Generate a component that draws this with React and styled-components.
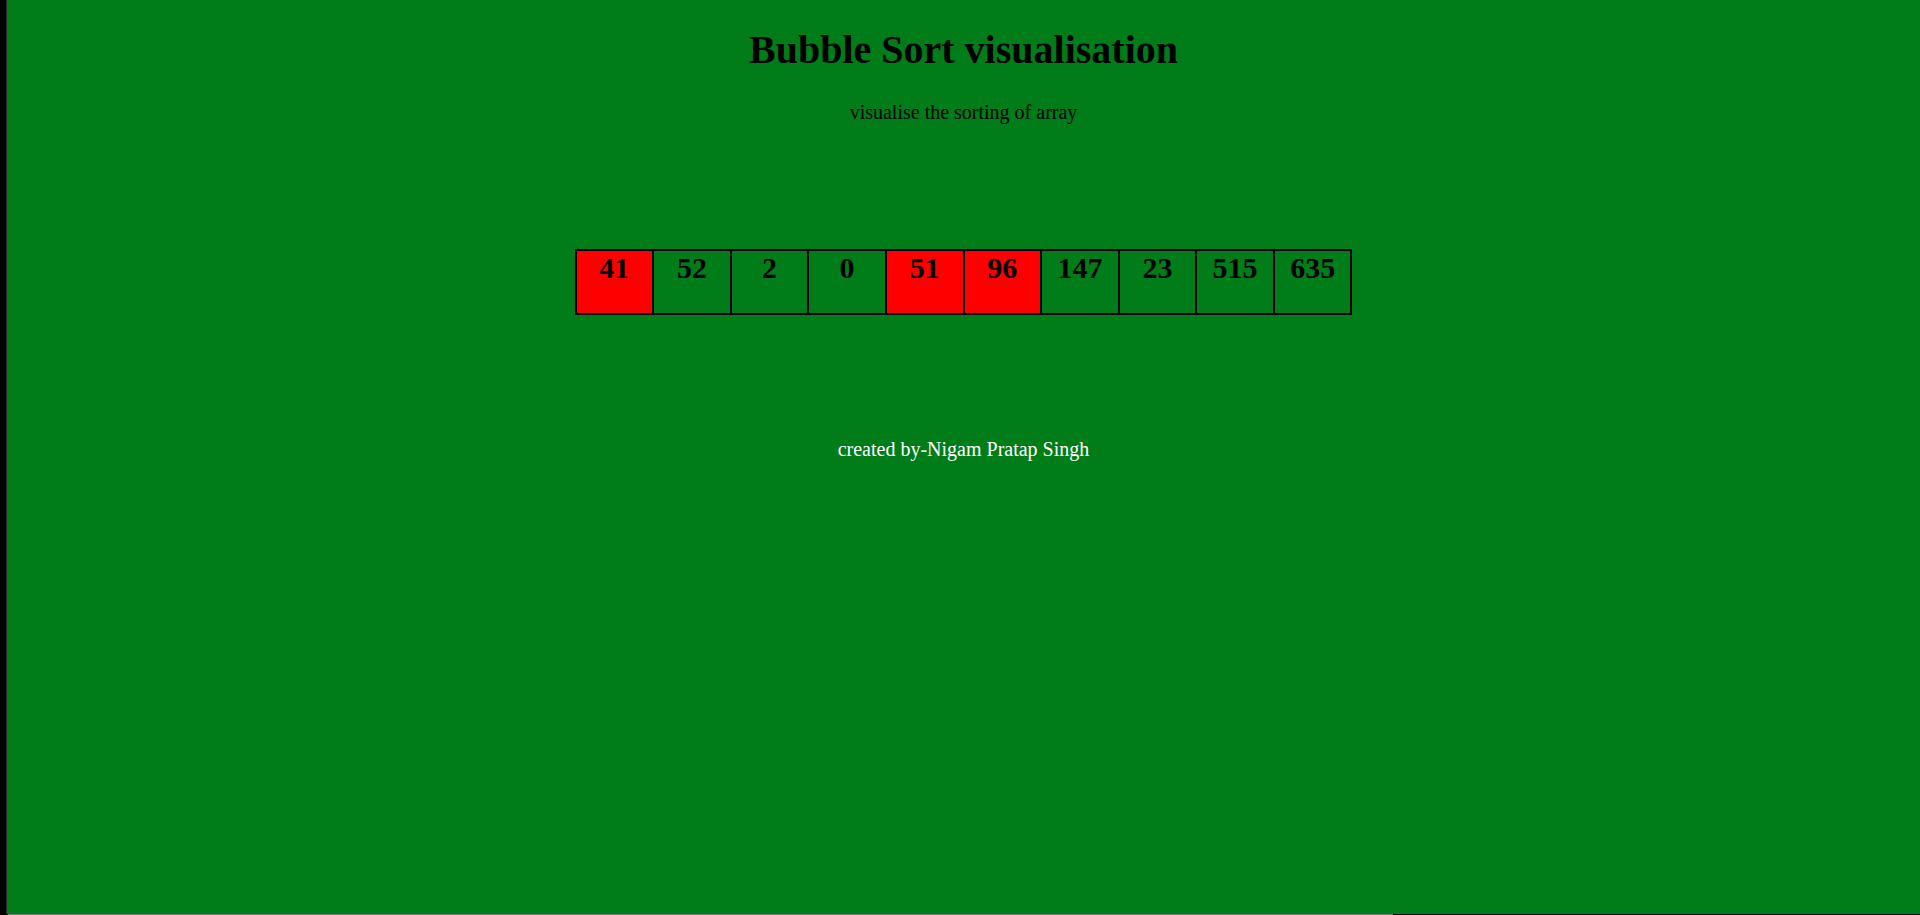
import React from "react";
import styled, { createGlobalStyle } from "styled-components";

const Global = createGlobalStyle`
  html, body { margin: 0; padding: 0; background: #000; }
  body { font-family: "Liberation Serif", "Times New Roman", serif; }
`;

const Screen = styled.div`
  display: flex;
  flex-direction: column;
  width: 1920px;
  height: 915px;
  background: #000;
`;

const Window = styled.div`
  flex: 1;
  display: flex;
  min-height: 0;
`;

const Edge = styled.div`
  width: 6px;
  background: #000;
  border-right: 1px solid #2a2a2a;
`;

const Page = styled.main`
  flex: 1;
  display: flex;
  flex-direction: column;
  align-items: center;
  background: #007c18;
  color: #000;
`;

const Title = styled.h1`
  margin: 26.8px 0 0;
  font-size: 40px;
  line-height: 46px;
  font-weight: bold;
`;

const Subtitle = styled.p`
  margin: 28px 0 0;
  font-size: 20px;
  line-height: 23px;
`;

const ArrayRow = styled.div`
  display: flex;
  margin-top: 125px;
  border: 1px solid #000;
`;

const Cell = styled.div`
  width: 75.6px;
  height: 62px;
  border: 1px solid #000;
  background: ${(p) => (p.$active ? "#ff0000" : "transparent")};
  display: flex;
  justify-content: center;
  align-items: flex-start;
`;

const Value = styled.h2`
  margin: 0;
  font-size: 30px;
  line-height: 34px;
  font-weight: bold;
`;

const Footer = styled.p`
  margin: 123.5px 0 0;
  font-size: 20px;
  line-height: 23px;
  color: #fff;
`;

const Bottom = styled.div`
  height: 1px;
  display: flex;
  background: #000;
`;

const BottomSeg = styled.div`
  margin-left: 8px;
  width: 1385px;
  background: #7a7a7a;
`;

const values = [
  { v: 41, a: true },
  { v: 52 },
  { v: 2 },
  { v: 0 },
  { v: 51, a: true },
  { v: 96, a: true },
  { v: 147 },
  { v: 23 },
  { v: 515 },
  { v: 635 },
];

export default function App() {
  return (
    <>
      <Global />
      <Screen>
        <Window>
          <Edge />
          <Page>
            <Title>Bubble Sort visualisation</Title>
            <Subtitle>visualise the sorting of array</Subtitle>
            <ArrayRow>
              {values.map((c, i) => (
                <Cell key={i} $active={c.a}>
                  <Value>{c.v}</Value>
                </Cell>
              ))}
            </ArrayRow>
            <Footer>created by-Nigam Pratap Singh</Footer>
          </Page>
        </Window>
        <Bottom>
          <BottomSeg />
        </Bottom>
      </Screen>
    </>
  );
}
